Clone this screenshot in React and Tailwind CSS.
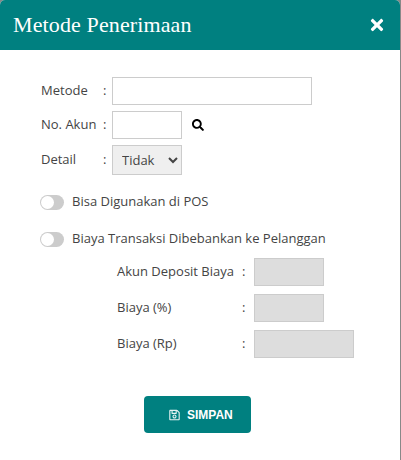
import React from "react";
import { FaRegSave, FaSearch, FaTimes } from "react-icons/fa";

const Toggle = () => (
  <div className="w-6 h-[15px] -ml-px rounded-full bg-[#ccc] relative shrink-0">
    <div className="absolute left-[1px] top-[1px] w-[13px] h-[13px] rounded-full bg-white" />
  </div>
);

const Row = ({ label, w }) => (
  <div className="flex items-center">
    <span className="w-[125px]">{label}</span>
    <span className="w-3">:</span>
    <div className={`${w} h-7 border border-[#ccc] bg-[#ddd]`} />
  </div>
);

export default function App() {
  return (
    <div className="w-[401px] h-[460px] bg-[#888] overflow-hidden">
      <div className="w-[400px] h-full bg-white text-[13px] text-[#444] overflow-hidden rounded-t-[5px]" style={{ fontFamily: '"Open Sans", sans-serif' }}>
        <header className="h-[50px] bg-[#008080] flex items-center justify-between pl-[13px] pr-[14px] text-white">
          <h1 className="text-[22px] leading-none tracking-[0.12px]" style={{ fontFamily: '"Liberation Serif", serif' }}>Metode Penerimaan</h1>
          <FaTimes className="w-[18px] h-[18px]" />
        </header>

        <div className="pl-[41px] pt-[27px]">
          <div className="flex flex-col gap-[6px]">
            <div className="flex items-center">
              <span className="w-[62px]">Metode</span><span className="w-[9px]">:</span>
              <input className="w-[200px] h-7 border border-[#ccc] outline-none" />
            </div>
            <div className="flex items-center">
              <span className="w-[62px]">No. Akun</span><span className="w-[9px]">:</span>
              <input className="w-[70px] h-7 border border-[#ccc] outline-none" />
              <FaSearch className="ml-[10px] w-[12px] h-[12px] text-black" />
            </div>
            <div className="flex items-center">
              <span className="w-[62px]">Detail</span><span className="w-[9px]">:</span>
              <select className="w-[70px] h-[30px] border border-[#ccc] bg-[#efefef] pl-[5px] text-[13px] outline-none" defaultValue="Tidak">
                <option>Tidak</option>
                <option>Ya</option>
              </select>
            </div>
          </div>

          <div className="flex items-center gap-[8px] mt-[20px] h-[14px]"><Toggle /><span>Bisa Digunakan di POS</span></div>
          <div className="flex items-center gap-[8px] mt-[23px] h-[14px]"><Toggle /><span>Biaya Transaksi Dibebankan ke Pelanggan</span></div>

          <div className="ml-[76px] mt-[12px] flex flex-col gap-2">
            <Row label="Akun Deposit Biaya" w="w-[70px]" />
            <Row label="Biaya (%)" w="w-[70px]" />
            <Row label="Biaya (Rp)" w="w-[100px]" />
          </div>

          <button className="ml-[103px] mt-[38px] w-[107px] h-[37px] rounded bg-[#008080] text-white text-[12px] font-bold flex items-center pl-[25px] gap-[7px]" style={{ fontFamily: '"Liberation Sans", sans-serif' }}>
            <FaRegSave className="w-[11px] h-[12px] text-[#e6f2f2]" />
            SIMPAN
          </button>
        </div>
      </div>
    </div>
  );
}
